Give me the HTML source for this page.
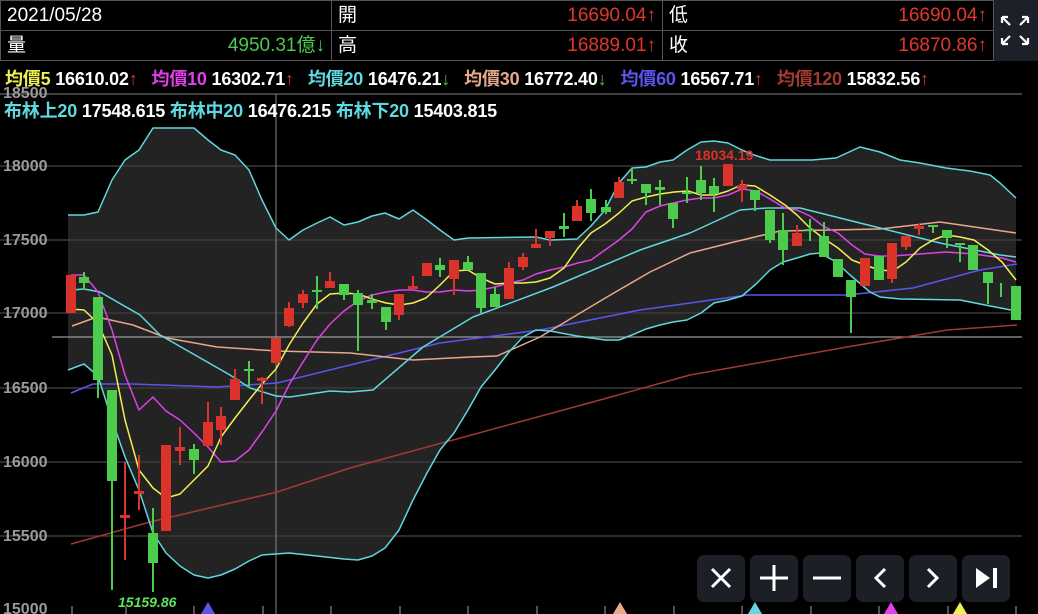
<!DOCTYPE html>
<html><head><meta charset="utf-8"><style>
*{margin:0;padding:0;box-sizing:border-box}
body{width:1038px;height:614px;background:#000;overflow:hidden;position:relative;font-family:"Liberation Sans","Noto Sans CJK TC",sans-serif;color:#fff}
.c{position:absolute;border:1px solid #555;height:31px;font-size:19px;line-height:29px;padding:0 6px;white-space:nowrap}
.r{float:right;color:#e0372c}
.g{color:#4cc94c}
.leg{position:absolute;left:5px;font-size:18px;font-weight:bold;white-space:nowrap;letter-spacing:-0.2px}
.leg i{font-style:normal;display:inline-block;width:14px}
.btn{position:absolute;top:555px;width:48px;height:47px;background:#1c1f26;border-radius:7px}
</style></head><body>
<svg width="1038" height="614" style="position:absolute;left:0;top:0">
<polygon fill="#232323" points="68,215 84,215 98,212 112,180 125,160 139,150 153,128 194,128 208,140 221,150 235,155 249,170 262,200 276,228 289,240 303,230 317,223 330,217 344,225 358,222 372,216 385,213 399,219 413,210 427,220 440,230 454,240 468,238 536,237 550,240 577,239 591,226 605,210 619,183 632,168 646,167 660,162 673,160 687,150 701,142 714,141 728,143 742,150 754,155 770,160 812,160 836,158 860,147 880,152 900,160 920,163 946,168 970,171 990,175 1000,183 1016,198 1016,311 985,305 960,300 900,299 880,297 870,292 850,275 836,262 820,253 810,254 797,258 783,262 770,270 756,284 742,296 728,300 714,303 701,313 687,320 673,322 660,325 646,329 632,335 619,340 605,340 591,338 577,336 550,331 536,330 523,337 509,352 495,370 481,387 468,410 454,433 440,450 427,473 413,500 399,530 385,548 372,556 358,560 344,559 317,556 289,553 262,555 249,561 235,569 221,575 208,578 194,575 180,566 166,553 153,533 139,490 125,457 112,420 98,376 84,364 68,370"/>
<g stroke="#3a3a3a" stroke-width="1.5">
<line x1="0" y1="94" x2="1022" y2="94" stroke="#555"/><line x1="0" y1="166" x2="1022" y2="166"/><line x1="0" y1="240" x2="1022" y2="240"/><line x1="0" y1="313" x2="1022" y2="313"/><line x1="0" y1="388" x2="1022" y2="388"/><line x1="0" y1="462" x2="1022" y2="462"/><line x1="0" y1="536" x2="1022" y2="536"/>
</g>
<line x1="276" y1="94" x2="276" y2="614" stroke="#888" stroke-width="1"/>
<line x1="52" y1="337" x2="1022" y2="337" stroke="#999" stroke-width="1.2"/>
<g stroke="#888" stroke-width="1.2">
<line x1="72" y1="606" x2="72" y2="614"/><line x1="126" y1="606" x2="126" y2="614"/><line x1="194" y1="606" x2="194" y2="614"/><line x1="263" y1="606" x2="263" y2="614"/><line x1="331" y1="606" x2="331" y2="614"/><line x1="400" y1="606" x2="400" y2="614"/><line x1="468" y1="606" x2="468" y2="614"/><line x1="537" y1="606" x2="537" y2="614"/><line x1="605" y1="606" x2="605" y2="614"/><line x1="674" y1="606" x2="674" y2="614"/><line x1="742" y1="606" x2="742" y2="614"/><line x1="811" y1="606" x2="811" y2="614"/><line x1="879" y1="606" x2="879" y2="614"/><line x1="948" y1="606" x2="948" y2="614"/><line x1="1016" y1="606" x2="1016" y2="614"/>
</g>
<g font-family="Liberation Sans" font-weight="bold" font-size="16" fill="#9a9a9a">
<text x="3" y="98">18500</text><text x="3" y="171">18000</text><text x="3" y="245">17500</text><text x="3" y="318">17000</text><text x="3" y="393">16500</text><text x="3" y="467">16000</text><text x="3" y="541">15500</text><text x="3" y="614">15000</text>
</g>
<g fill="none" stroke-width="1.5" stroke-linejoin="round">
<polyline stroke="#a33a32" points="71,544 150,522 277,492 350,468 600,400 690,375 847,347 947,330 1017,325"/>
<polyline stroke="#5a55ee" points="71,393 93,384 133,384 217,387 277,383 350,365 440,343 540,330 640,310 690,303 747,295 847,295 913,288 980,270 1017,264"/>
<polyline stroke="#e8a88a" points="72,326 97,317 133,325 167,338 217,347 277,351 350,353 413,360 470,357 497,356 540,337 607,297 650,272 690,253 730,243 780,231 880,229 940,222 1016,233"/>
<polyline stroke="#5fd8e0" points="68,215 84,215 98,212 112,180 125,160 139,150 153,128 194,128 208,140 221,150 235,155 249,170 262,200 276,228 289,240 303,230 317,223 330,217 344,225 358,222 372,216 385,213 399,219 413,210 427,220 440,230 454,240 468,238 536,237 550,240 577,239 591,226 605,210 619,183 632,168 646,167 660,162 673,160 687,150 701,142 714,141 728,143 742,150 754,155 770,160 812,160 836,158 860,147 880,152 900,160 920,163 946,168 970,171 990,175 1000,183 1016,198"/>
<polyline stroke="#5fd8e0" points="1016,311 985,305 960,300 900,299 880,297 870,292 850,275 836,262 820,253 810,254 797,258 783,262 770,270 756,284 742,296 728,300 714,303 701,313 687,320 673,322 660,325 646,329 632,335 619,340 605,340 591,338 577,336 550,331 536,330 523,337 509,352 495,370 481,387 468,410 454,433 440,450 427,473 413,500 399,530 385,548 372,556 358,560 344,559 317,556 289,553 262,555 249,561 235,569 221,575 208,578 194,575 180,566 166,553 153,533 139,490 125,457 112,420 98,376 84,364 68,370"/>
<polyline stroke="#5fd8e0" points="71,290 84,289 100,292 140,315 160,335 195,355 230,375 250,388 276,396 290,397 330,391 350,392 373,390 423,347 473,317 553,287 640,250 690,233 740,210 767,208 800,208 840,218 880,228 940,243 1000,255 1016,257"/>
<polyline stroke="#e040e8" points="71,275 84,275 98,292 112,330 125,375 139,410 153,397 166,411 180,420 194,433 208,447 221,462 235,461 249,450 262,432 276,411 290,383 303,362 317,340 330,324 344,311 358,301 372,295 386,292 400,290 413,290 426,292 440,292 454,290 468,291 481,290 495,287 509,283 523,280 536,274 550,270 564,267 578,263 591,260 605,250 619,240 632,229 646,212 660,206 673,203 687,200 701,198 714,198 728,195 742,189 756,191 770,199 785,208 797,210 810,216 823,226 838,233 852,245 865,254 879,256 893,256 906,255 946,252 974,254 1002,258 1016,262"/>
<polyline stroke="#f2f050" points="71,309 84,310 98,323 112,355 125,420 139,470 153,488 166,498 180,494 194,480 208,466 221,437 235,418 249,400 262,384 276,369 289,345 303,323 317,304 330,294 344,293 358,294 372,299 386,303 400,305 413,303 426,298 440,285 454,271 468,270 481,278 495,284 509,283 523,283 536,282 550,278 564,268 578,248 591,233 605,224 619,213 632,201 646,197 660,194 674,192 688,191 701,195 715,195 728,191 741,185 755,186 770,195 785,205 797,215 810,228 823,238 838,248 852,260 865,265 879,270 893,271 906,262 920,248 933,240 946,235 960,237 974,240 988,250 1002,262 1016,280"/>
</g>
<g stroke="#d9332a" fill="#d9332a" stroke-width="2">
<line x1="71" y1="275" x2="71" y2="313"/><rect x="66" y="275" width="10" height="38" stroke="none"/>
<line x1="125" y1="462" x2="125" y2="560"/><rect x="120" y="515" width="10" height="3" stroke="none"/>
<line x1="139" y1="455" x2="139" y2="510"/><rect x="134" y="491" width="10" height="3" stroke="none"/>
<rect x="161" y="445" width="10" height="86" stroke="none"/>
<line x1="180" y1="427" x2="180" y2="465"/><rect x="175" y="447" width="10" height="4" stroke="none"/>
<line x1="208" y1="402" x2="208" y2="446"/><rect x="203" y="422" width="10" height="24" stroke="none"/>
<line x1="221" y1="407" x2="221" y2="445"/><rect x="216" y="416" width="10" height="14" stroke="none"/>
<line x1="235" y1="369" x2="235" y2="400"/><rect x="230" y="379" width="10" height="21" stroke="none"/>
<line x1="262" y1="377" x2="262" y2="404"/><rect x="257" y="378" width="10" height="3" stroke="none"/>
<rect x="271" y="338" width="10" height="25" stroke="none"/>
<line x1="289" y1="302" x2="289" y2="327"/><rect x="284" y="308" width="10" height="18" stroke="none"/>
<line x1="303" y1="290" x2="303" y2="308"/><rect x="298" y="294" width="10" height="9" stroke="none"/>
<line x1="330" y1="272" x2="330" y2="288"/><rect x="325" y="281" width="10" height="7" stroke="none"/>
<rect x="394" y="294" width="10" height="21" stroke="none"/><line x1="399" y1="294" x2="399" y2="320"/>
<line x1="413" y1="276" x2="413" y2="289"/><rect x="408" y="286" width="10" height="3" stroke="none"/>
<rect x="422" y="263" width="10" height="13" stroke="none"/>
<line x1="454" y1="260" x2="454" y2="295"/><rect x="449" y="260" width="10" height="19" stroke="none"/>
<line x1="509" y1="262" x2="509" y2="299"/><rect x="504" y="268" width="10" height="31" stroke="none"/>
<line x1="523" y1="253" x2="523" y2="270"/><rect x="518" y="257" width="10" height="10" stroke="none"/>
<line x1="536" y1="229" x2="536" y2="248"/><rect x="531" y="244" width="10" height="4" stroke="none"/>
<line x1="550" y1="231" x2="550" y2="246"/><rect x="545" y="231" width="10" height="7" stroke="none"/>
<line x1="577" y1="200" x2="577" y2="221"/><rect x="572" y="206" width="10" height="15" stroke="none"/>
<line x1="619" y1="177" x2="619" y2="198"/><rect x="614" y="182" width="10" height="16" stroke="none"/>
<rect x="723" y="164" width="10" height="22" stroke="none"/>
<line x1="742" y1="180" x2="742" y2="202"/><rect x="737" y="185" width="10" height="4" stroke="none"/>
<line x1="797" y1="225" x2="797" y2="246"/><rect x="792" y="233" width="10" height="13" stroke="none"/>
<rect x="860" y="258" width="10" height="28" stroke="none"/>
<line x1="892" y1="243" x2="892" y2="283"/><rect x="887" y="243" width="10" height="36" stroke="none"/>
<line x1="906" y1="236" x2="906" y2="250"/><rect x="901" y="236" width="10" height="11" stroke="none"/>
<line x1="919" y1="224" x2="919" y2="235"/><rect x="914" y="226" width="10" height="3" stroke="none"/>
</g>
<g stroke="#4ccb4c" fill="#4ccb4c" stroke-width="2">
<line x1="84" y1="272" x2="84" y2="290"/><rect x="79" y="277" width="10" height="6" stroke="none"/>
<line x1="98" y1="297" x2="98" y2="398"/><rect x="93" y="297" width="10" height="83" stroke="none"/>
<line x1="112" y1="390" x2="112" y2="590"/><rect x="107" y="390" width="10" height="91" stroke="none"/>
<line x1="153" y1="508" x2="153" y2="592"/><rect x="148" y="533" width="10" height="30" stroke="none"/>
<line x1="194" y1="444" x2="194" y2="474"/><rect x="189" y="449" width="10" height="11" stroke="none"/>
<line x1="249" y1="361" x2="249" y2="388"/><rect x="244" y="369" width="10" height="2" stroke="none"/>
<line x1="317" y1="276" x2="317" y2="309"/><rect x="312" y="290" width="10" height="2" stroke="none"/>
<line x1="344" y1="284" x2="344" y2="300"/><rect x="339" y="284" width="10" height="11" stroke="none"/>
<line x1="358" y1="290" x2="358" y2="351"/><rect x="353" y="293" width="10" height="12" stroke="none"/>
<line x1="372" y1="294" x2="372" y2="309"/><rect x="367" y="300" width="10" height="3" stroke="none"/>
<line x1="386" y1="307" x2="386" y2="330"/><rect x="381" y="307" width="10" height="15" stroke="none"/>
<line x1="440" y1="258" x2="440" y2="277"/><rect x="435" y="265" width="10" height="5" stroke="none"/>
<line x1="468" y1="256" x2="468" y2="270"/><rect x="463" y="262" width="10" height="8" stroke="none"/>
<line x1="481" y1="273" x2="481" y2="313"/><rect x="476" y="273" width="10" height="35" stroke="none"/>
<line x1="495" y1="287" x2="495" y2="307"/><rect x="490" y="294" width="10" height="13" stroke="none"/>
<line x1="564" y1="213" x2="564" y2="237"/><rect x="559" y="226" width="10" height="3" stroke="none"/>
<line x1="591" y1="189" x2="591" y2="221"/><rect x="586" y="199" width="10" height="14" stroke="none"/>
<line x1="606" y1="200" x2="606" y2="214"/><rect x="601" y="207" width="10" height="5" stroke="none"/>
<line x1="632" y1="168" x2="632" y2="184"/><rect x="627" y="179" width="10" height="2" stroke="none"/>
<line x1="646" y1="184" x2="646" y2="205"/><rect x="641" y="184" width="10" height="9" stroke="none"/>
<line x1="660" y1="180" x2="660" y2="205"/><rect x="655" y="187" width="10" height="3" stroke="none"/>
<line x1="673" y1="203" x2="673" y2="228"/><rect x="668" y="203" width="10" height="16" stroke="none"/>
<line x1="687" y1="177" x2="687" y2="203"/><rect x="682" y="192" width="10" height="2" stroke="none"/>
<line x1="701" y1="166" x2="701" y2="200"/><rect x="696" y="180" width="10" height="13" stroke="none"/>
<line x1="714" y1="178" x2="714" y2="212"/><rect x="709" y="186" width="10" height="8" stroke="none"/>
<line x1="755" y1="190" x2="755" y2="211"/><rect x="750" y="190" width="10" height="10" stroke="none"/>
<line x1="770" y1="210" x2="770" y2="243"/><rect x="765" y="210" width="10" height="30" stroke="none"/>
<line x1="783" y1="213" x2="783" y2="265"/><rect x="778" y="230" width="10" height="20" stroke="none"/>
<line x1="810" y1="219" x2="810" y2="241"/><rect x="805" y="229" width="10" height="2" stroke="none"/>
<line x1="824" y1="222" x2="824" y2="257"/><rect x="819" y="236" width="10" height="21" stroke="none"/>
<rect x="833" y="259" width="10" height="18" stroke="none"/>
<line x1="851" y1="280" x2="851" y2="333"/><rect x="846" y="280" width="10" height="17" stroke="none"/>
<rect x="874" y="256" width="10" height="24" stroke="none"/>
<line x1="933" y1="225" x2="933" y2="233"/><rect x="928" y="225" width="10" height="2" stroke="none"/>
<line x1="947" y1="230" x2="947" y2="248"/><rect x="942" y="230" width="10" height="8" stroke="none"/>
<line x1="960" y1="243" x2="960" y2="262"/><rect x="955" y="243" width="10" height="2" stroke="none"/>
<rect x="968" y="245" width="10" height="25" stroke="none"/>
<line x1="988" y1="272" x2="988" y2="304"/><rect x="983" y="272" width="10" height="11" stroke="none"/>
<line x1="1001" y1="283" x2="1001" y2="297"/>
<rect x="1011" y="286" width="10" height="34" stroke="none"/>
</g>
<text x="695" y="160" fill="#d9332a" font-family="Liberation Sans" font-weight="bold" font-size="14">18034.19</text>
<text x="118" y="607" fill="#5fe05f" font-family="Liberation Sans" font-weight="bold" font-style="italic" font-size="14">15159.86</text>
<polygon points="208,602 201,614 215,614" fill="#5a55ee"/>
<polygon points="620,602 613,614 627,614" fill="#e8a88a"/>
<polygon points="755,602 748,614 762,614" fill="#5fd8e0"/>
<polygon points="891,602 884,614 898,614" fill="#e040e8"/>
<polygon points="960,602 953,614 967,614" fill="#f2f050"/>
</svg>
<div class="c" style="left:0;top:0;width:332px">2021/05/28</div>
<div class="c" style="left:331px;top:0;width:332px">開<span class="r">16690.04↑</span></div>
<div class="c" style="left:662px;top:0;width:332px">低<span class="r">16690.04↑</span></div>
<div class="c" style="left:0;top:30px;width:332px">量<span class="r g" style="color:#4cc94c">4950.31億↓</span></div>
<div class="c" style="left:331px;top:30px;width:332px">高<span class="r">16889.01↑</span></div>
<div class="c" style="left:662px;top:30px;width:332px">收<span class="r">16870.86↑</span></div>
<div style="position:absolute;left:994px;top:0;width:44px;height:61px;background:#1b2029">
<svg width="44" height="61"><g stroke="#fff" stroke-width="2.2" fill="none">
<path d="M8 17 L16 25 M8 17 h6 M8 17 v6"/><path d="M34 17 L26 25 M34 17 h-6 M34 17 v6"/>
<path d="M8 44 L16 36 M8 44 h6 M8 44 v-6"/><path d="M34 44 L26 36 M34 44 h-6 M34 44 v-6"/>
</g></svg></div>
<div class="leg" style="top:65px"><span style="color:#f2f050">均價5</span> 16610.02<span style="color:#e0372c">↑</span><i></i><span style="color:#e040e8">均價10</span> 16302.71<span style="color:#e0372c">↑</span><i></i><span style="color:#5fd8e0">均價20</span> 16476.21<span class="g">↓</span><i></i><span style="color:#e8a88a">均價30</span> 16772.40<span class="g">↓</span><i></i><span style="color:#5a55ee">均價60</span> 16567.71<span style="color:#e0372c">↑</span><i></i><span style="color:#a33a32">均價120</span> 15832.56<span style="color:#e0372c">↑</span></div>
<div class="leg" style="top:97px;left:4px"><span style="color:#5fd8e0">布林上20</span> 17548.615 <span style="color:#5fd8e0">布林中20</span> 16476.215 <span style="color:#5fd8e0">布林下20</span> 15403.815</div>
<div class="btn" style="left:697px"><svg width="48" height="47"><path d="M15 14 L33 32 M33 14 L15 32" stroke="#fff" stroke-width="3"/></svg></div>
<div class="btn" style="left:750px"><svg width="48" height="47"><path d="M24 10 V36 M10 23 H38" stroke="#fff" stroke-width="3"/></svg></div>
<div class="btn" style="left:803px"><svg width="48" height="47"><path d="M10 23 H38" stroke="#fff" stroke-width="3"/></svg></div>
<div class="btn" style="left:856px"><svg width="48" height="47"><path d="M29 14 L20 23 L29 32" stroke="#fff" stroke-width="3" fill="none"/></svg></div>
<div class="btn" style="left:909px"><svg width="48" height="47"><path d="M19 14 L28 23 L19 32" stroke="#fff" stroke-width="3" fill="none"/></svg></div>
<div class="btn" style="left:962px"><svg width="48" height="47"><path d="M14 13 L28 23 L14 33 Z" fill="#fff"/><rect x="31" y="13" width="4" height="20" fill="#fff"/></svg></div>
</body></html>
